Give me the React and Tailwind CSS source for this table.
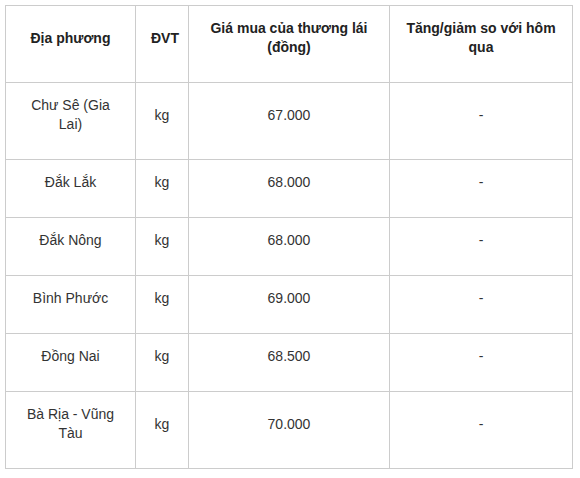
const rows = [
  { place: "Chư Sê (Gia Lai)", unit: "kg", price: "67.000", change: "-" },
  { place: "Đắk Lắk", unit: "kg", price: "68.000", change: "-" },
  { place: "Đắk Nông", unit: "kg", price: "68.000", change: "-" },
  { place: "Bình Phước", unit: "kg", price: "69.000", change: "-" },
  { place: "Đồng Nai", unit: "kg", price: "68.500", change: "-" },
  { place: "Bà Rịa - Vũng Tàu", unit: "kg", price: "70.000", change: "-" },
];

const cell =
  "border border-[#cccccc] px-[15px] pt-[13px] pb-[25px] text-center align-middle";

export default function App() {
  return (
    <div className="bg-white p-[5px] font-['Liberation_Sans',Arial,sans-serif] text-[14px] leading-[19px] text-[#333333]">
      <table className="table-fixed border-collapse w-[567px]">
        <colgroup>
          <col className="w-[130px]" />
          <col className="w-[53px]" />
          <col className="w-[201px]" />
          <col className="w-[183px]" />
        </colgroup>
        <thead>
          <tr className="font-bold text-[#222222]">
            <th className={cell}>Địa phương</th>
            <th className={cell}>ĐVT</th>
            <th className={cell}>Giá mua của thương lái (đồng)</th>
            <th className={cell}>Tăng/giảm so với hôm qua</th>
          </tr>
        </thead>
        <tbody>
          {rows.map((r) => (
            <tr key={r.place}>
              <td className={cell}>{r.place}</td>
              <td className={cell}>{r.unit}</td>
              <td className={cell}>{r.price}</td>
              <td className={cell}>{r.change}</td>
            </tr>
          ))}
        </tbody>
      </table>
    </div>
  );
}
